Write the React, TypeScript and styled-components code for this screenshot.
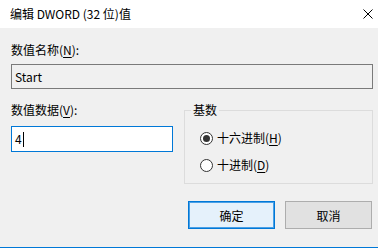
import * as React from 'react';
import styled, { createGlobalStyle } from 'styled-components';

const GlobalStyle = createGlobalStyle`
	html, body {
		margin: 0;
		padding: 0;
		background: #f0f0f0;
	}
	body {
		font-family: "Noto Sans CJK SC", "Noto Sans", sans-serif;
		font-size: 12px;
		color: #000;
	}
`;

const Window = styled.div`
	width: 378px;
	height: 248px;
	box-sizing: border-box;
	background: #f0f0f0;
	border-bottom: 1px solid #0078d7;
	display: flex;
	flex-direction: column;
	overflow: hidden;
`;

const TitleBar = styled.div`
	height: 28px;
	flex: none;
	background: #fff;
	display: flex;
	align-items: center;
	justify-content: space-between;
	padding: 0 5px 0 10px;
`;

const Title = styled.span`
	font-size: 12px;
	line-height: 16px;
`;

const CloseButton = styled.div`
	width: 10px;
	height: 10px;
	display: flex;
`;

const Body = styled.div`
	padding: 14px 5px 0 11px;
	display: flex;
	flex-direction: column;
`;

const Label = styled.div`
	line-height: 16px;
	white-space: nowrap;
`;

const Key = styled.span`
	text-decoration: underline;
	text-underline-offset: 2px;
`;

const EditBox = styled.div<{ $focused?: boolean, $readOnly?: boolean }>`
	height: 25px;
	box-sizing: border-box;
	border: 1px solid ${(p) => (p.$focused ? '#0078d7' : '#7a7a7a')};
	background: ${(p) => (p.$readOnly ? '#f0f0f0' : '#fff')};
	padding: 0 3px;
	display: flex;
	align-items: center;
	line-height: 16px;
	margin-top: 6px;
`;

const Caret = styled.span`
	display: inline-block;
	width: 1px;
	height: 15px;
	background: #000;
	margin-left: 1px;
`;

const Row = styled.div`
	display: flex;
	gap: 11px;
	margin-top: 13px;
`;

const Column = styled.div`
	width: 162px;
	display: flex;
	flex-direction: column;
`;

const DataBox = styled(EditBox)`
	height: 26px;
	margin-top: 8px;
`;

const Group = styled.fieldset`
	flex: 1;
	margin: 0;
	padding: 0;
	border: 1px solid #dcdcdc;
	min-width: 0;
`;

const Legend = styled.legend`
	margin-left: 6px;
	padding: 0 2px;
	line-height: 16px;
`;

const RadioList = styled.div`
	display: flex;
	flex-direction: column;
	gap: 11px;
	padding: 12px 0 10px 15px;
`;

const RadioRow = styled.label`
	display: flex;
	align-items: center;
	gap: 4px;
	line-height: 16px;
`;

const RadioCircle = styled.span<{ $checked?: boolean }>`
	width: 13px;
	height: 13px;
	box-sizing: border-box;
	border: 1px solid #333;
	border-radius: 50%;
	background: #fff;
	display: flex;
	align-items: center;
	justify-content: center;
	&::after {
		content: '';
		width: 7px;
		height: 7px;
		border-radius: 50%;
		background: ${(p) => (p.$checked ? '#333' : 'transparent')};
	}
`;

const Buttons = styled.div`
	display: flex;
	justify-content: flex-end;
	gap: 10px;
	margin-top: 17px;
	padding-right: 1px;
`;

const Button = styled.button<{ $default?: boolean }>`
	width: 87px;
	height: 28px;
	box-sizing: border-box;
	font: inherit;
	color: #000;
	border: 1px solid ${(p) => (p.$default ? '#0078d7' : '#adadad')};
	background: ${(p) => (p.$default ? '#e5f1fb' : '#e1e1e1')};
	box-shadow: ${(p) => (p.$default ? 'inset 0 0 0 1px #4aa0e6' : 'none')};
	padding: 0;
`;

interface IRadioProps {
	checked?: boolean,
	children?: React.ReactNode,
}

const Radio: React.FC<IRadioProps> = (props) => (
	<RadioRow>
		<RadioCircle $checked={props.checked} />
		<span>{props.children}</span>
	</RadioRow>
);

const App: React.FC = () => {
	return (
		<>
			<GlobalStyle />
			<Window>
				<TitleBar>
					<Title>编辑 DWORD (32 位)值</Title>
					<CloseButton>
						<svg width="10" height="10" viewBox="0 0 10 10">
							<path d="M0.5 0.5 L9.5 9.5 M9.5 0.5 L0.5 9.5" stroke="#000" strokeWidth="1" fill="none" />
						</svg>
					</CloseButton>
				</TitleBar>
				<Body>
					<Label>数值名称(<Key>N</Key>):</Label>
					<EditBox $readOnly>Start</EditBox>
					<Row>
						<Column>
							<Label>数值数据(<Key>V</Key>):</Label>
							<DataBox $focused>4<Caret /></DataBox>
						</Column>
						<Group>
							<Legend>基数</Legend>
							<RadioList>
								<Radio checked>十六进制(<Key>H</Key>)</Radio>
								<Radio>十进制(<Key>D</Key>)</Radio>
							</RadioList>
						</Group>
					</Row>
					<Buttons>
						<Button $default>确定</Button>
						<Button>取消</Button>
					</Buttons>
				</Body>
			</Window>
		</>
	);
};

export default App;
